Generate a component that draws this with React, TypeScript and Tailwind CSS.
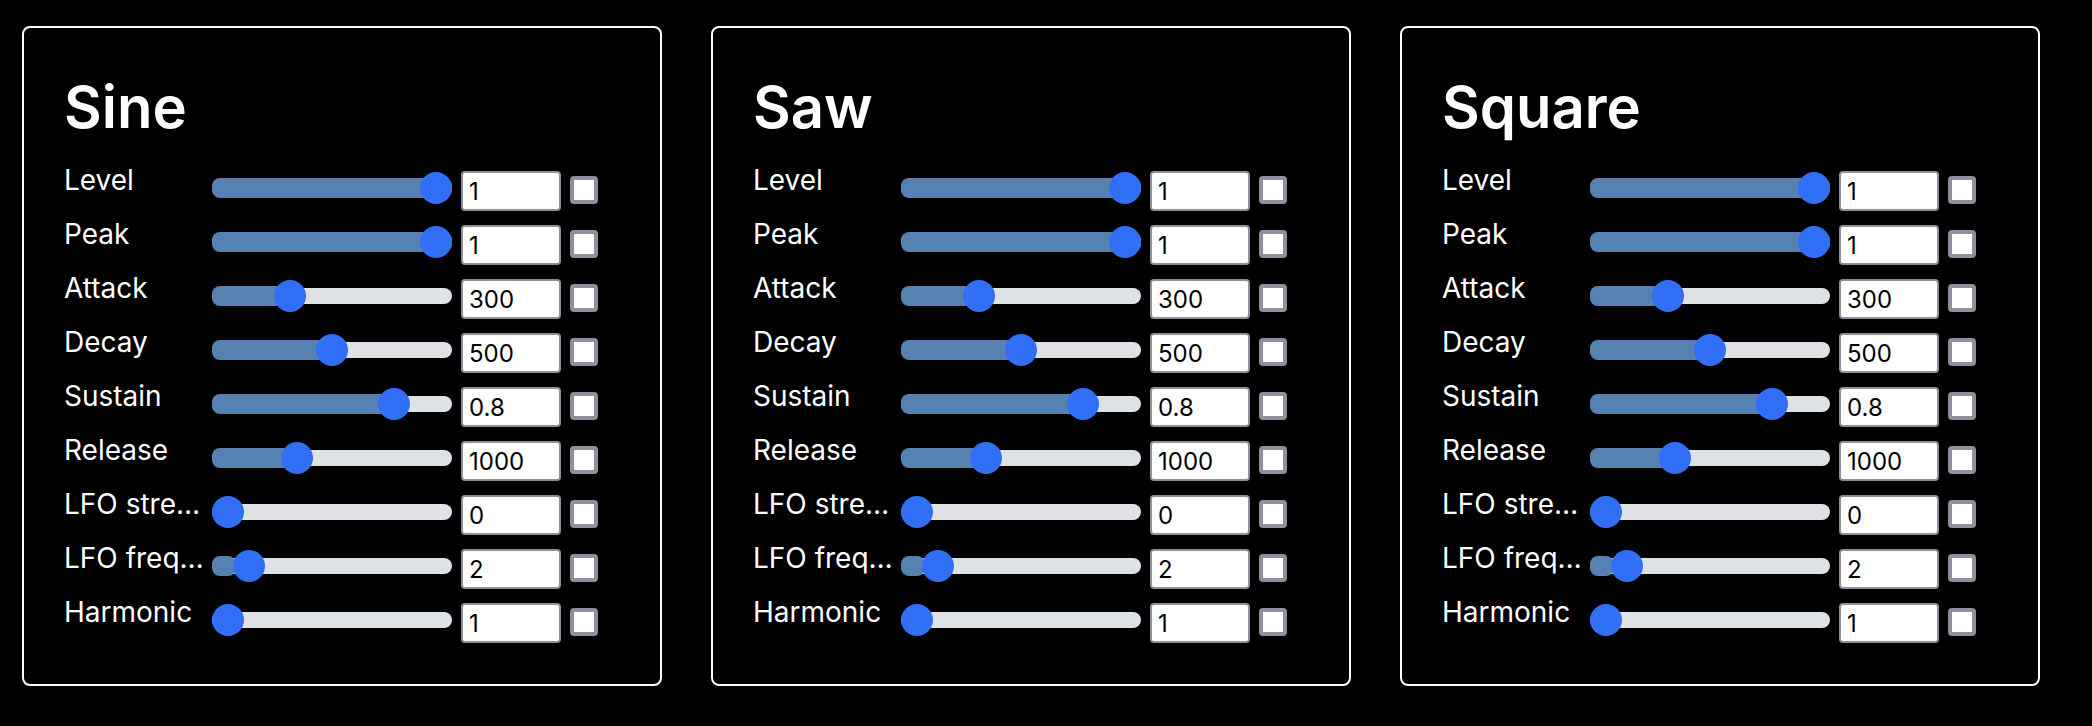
import { useId, useState } from "react";

type Param = {
  label: string;
  min: number;
  max: number;
  step: number;
  initial: number;
};

const PARAMS: Param[] = [
  { label: "Level", min: 0, max: 1, step: 0.01, initial: 1 },
  { label: "Peak", min: 0, max: 1, step: 0.01, initial: 1 },
  { label: "Attack", min: 0, max: 1000, step: 1, initial: 300 },
  { label: "Decay", min: 0, max: 1000, step: 1, initial: 500 },
  { label: "Sustain", min: 0, max: 1, step: 0.01, initial: 0.8 },
  { label: "Release", min: 0, max: 3000, step: 1, initial: 1000 },
  { label: "LFO strength", min: 0, max: 100, step: 1, initial: 0 },
  { label: "LFO frequency", min: 0, max: 20, step: 0.1, initial: 2 },
  { label: "Harmonic", min: 1, max: 16, step: 1, initial: 1 },
];

function ParamRow({ label, min, max, step, initial }: Param) {
  const id = useId();
  const [value, setValue] = useState(initial);
  const [checked, setChecked] = useState(false);
  const percent = Math.min(100, Math.max(0, ((value - min) / (max - min)) * 100));

  return (
    <div className="flex h-[54px] items-start pr-[22px]">
      <label htmlFor={id} className="w-[148px] shrink-0 truncate pr-1 text-[28px] leading-[44px]">
        {label}
      </label>
      <div className="flex min-w-0 flex-1 items-start gap-[9px]">
        <div className="mt-[14px] grid h-8 min-w-0 flex-1 items-center">
          <div className="col-start-1 row-start-1 h-4 rounded-full bg-[#dee2e6]" />
          <div
            className="col-start-1 row-start-1 h-5 rounded-lg bg-[#5781b1]"
            style={{ width: `${percent}%` }}
          />
          <input
            id={id}
            type="range"
            min={min}
            max={max}
            step={step}
            value={value}
            onChange={(e) => setValue(Number(e.target.value))}
            className="z-10 col-start-1 row-start-1 m-0 h-8 w-full min-w-0 cursor-pointer appearance-none bg-transparent [&::-moz-range-thumb]:size-8 [&::-moz-range-thumb]:rounded-full [&::-moz-range-thumb]:border-0 [&::-moz-range-thumb]:bg-[#306ff6] [&::-webkit-slider-thumb]:size-8 [&::-webkit-slider-thumb]:appearance-none [&::-webkit-slider-thumb]:rounded-full [&::-webkit-slider-thumb]:bg-[#306ff6]"
          />
        </div>
        <input
          type="number"
          aria-label={`${label} value`}
          min={min}
          max={max}
          step={step}
          value={value}
          onChange={(e) => setValue(Number(e.target.value))}
          className="mt-[13px] h-10 w-[100px] shrink-0 rounded-sm border-2 border-[#8f8f9d] bg-white px-[6px] text-[24px] text-black"
        />
        <input
          type="checkbox"
          aria-label={`${label} enabled`}
          checked={checked}
          onChange={(e) => setChecked(e.target.checked)}
          className="mt-[18px] size-7 shrink-0 appearance-none rounded-sm border-4 border-[#8f8f9d] bg-white checked:bg-[#306ff6]"
        />
      </div>
    </div>
  );
}

function Oscillator({ name }: { name: string }) {
  return (
    <section className="min-w-0 rounded-lg border-2 border-white p-10">
      <h2 className="mb-3 text-[58px] font-semibold leading-[78px]">{name}</h2>
      {PARAMS.map((param) => (
        <ParamRow key={param.label} {...param} />
      ))}
    </section>
  );
}

export default function App() {
  return (
    <main className="min-h-screen bg-black pt-[26px] pr-[52px] pb-10 pl-[22px] font-['Inter',sans-serif] text-white">
      <div className="grid grid-cols-3 gap-[49px]">
        <Oscillator name="Sine" />
        <Oscillator name="Saw" />
        <Oscillator name="Square" />
      </div>
    </main>
  );
}
